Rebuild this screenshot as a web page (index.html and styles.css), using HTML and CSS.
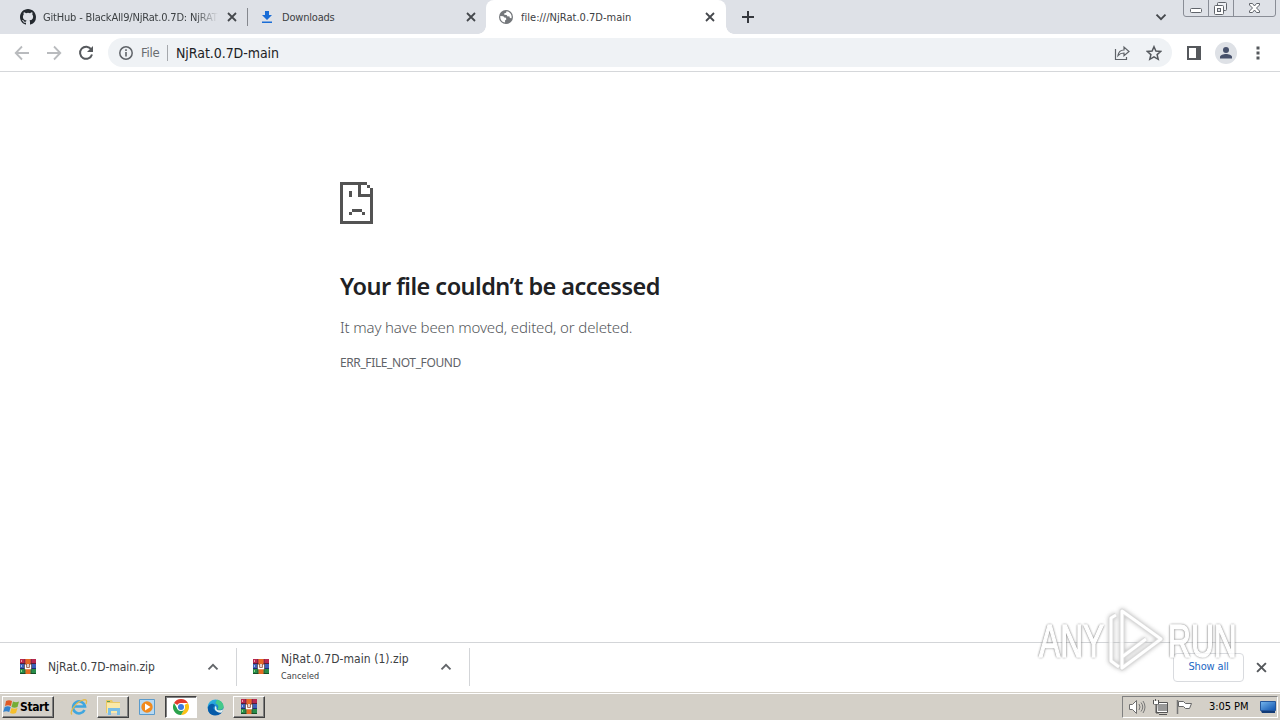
FILE: index.html
```html
<!DOCTYPE html>
<html lang="en">
<head>
<meta charset="utf-8">
<title>file:///NjRat.0.7D-main</title>
<link rel="stylesheet" href="styles.css">
</head>
<body>
<svg class="defs" width="0" height="0">
  <defs>
    <linearGradient id="blue" x1="0" y1="0" x2="1" y2="1"><stop offset="0" stop-color="#78b8ee"/><stop offset="1" stop-color="#0b50ad"/></linearGradient>
    <linearGradient id="edge" x1="0" y1="0" x2="0.7" y2="1"><stop offset="0" stop-color="#35c1df"/><stop offset=".4" stop-color="#239dde"/><stop offset="1" stop-color="#0757a8"/></linearGradient>
    <symbol id="close" viewBox="0 0 10 10"><path d="M1 1l8 8M9 1l-8 8" fill="none" stroke="currentColor" stroke-width="1.8"/></symbol>
    <symbol id="chev" viewBox="0 0 12 8"><path d="M1.500 6.300L6 1.800l4.500 4.500" fill="none" stroke="currentColor" stroke-width="1.9"/></symbol>
    <symbol id="rar" viewBox="0 0 16 16">
      <path fill="#b82750" d="M0 0h16v5H0z"/><path fill="#3c60b8" d="M0 5h16v5H0z"/><path fill="#278c49" d="M0 10h16v5H0z"/>
      <path fill="#5c1c38" d="M0 4h16v1H0z"/><path fill="#202d70" d="M0 9h16v1H0z"/><path fill="#155126" d="M0 14h16v1H0z"/>
      <path fill="#efa0aa" d="M1 1h1v2H1z"/><path fill="#9dbcf0" d="M1 6h1v2H1z"/><path fill="#8edc88" d="M1 11h1v2H1z"/>
      <path fill="#e66a24" d="M5.500 0h5v15h-5z"/><path fill="#8c4630" d="M4.500 5h7v5h-7z"/><path fill="none" stroke="#fff" stroke-width="1.500" d="M5.500 5.500v4h5v-4M8 5v3"/>
      <path fill="#303030" d="M4 0h1v15H4zM11 0h1v15h-1z" opacity=".35"/>
    </symbol>
  </defs>
</svg>
<header class="tabstrip">
  <div class="tab tab-github">
    <svg class="fav" width="16" height="16" viewBox="0 0 16 16"><path fill="#24292f" d="M8 0C3.580 0 0 3.580 0 8c0 3.540 2.290 6.530 5.470 7.590.4.070.55-.17.55-.38 0-.19-.01-.82-.01-1.490-2.010.37-2.530-.49-2.690-.94-.09-.23-.48-.94-.82-1.130-.28-.15-.68-.52-.01-.53.63-.01 1.080.58 1.230.82.72 1.210 1.870.87 2.330.66.070-.52.28-.87.51-1.070-1.780-.2-3.640-.89-3.640-3.950 0-.87.31-1.590.82-2.150-.08-.2-.36-1.020.08-2.120 0 0 .67-.21 2.200.82a7.420 7.420 0 0 1 4 0c1.530-1.040 2.200-.82 2.200-.82.44 1.100.16 1.920.08 2.120.51.56.82 1.270.82 2.150 0 3.070-1.870 3.750-3.650 3.950.29.25.54.73.54 1.480 0 1.070-.01 1.930-.01 2.200 0 .21.15.46.55.38A8.010 8.010 0 0 0 16 8c0-4.420-3.580-8-8-8z"/></svg>
    <span class="tab-title fade t-github">GitHub - BlackAll9/NjRat.0.7D: NjRAT</span>
    <svg class="tab-close" width="10" height="10"><use href="#close"/></svg>
  </div>
  <div class="tab tab-downloads">
    <svg class="fav" width="16" height="16" viewBox="0 0 16 16"><path fill="#1a6dd6" d="M6 2h4v4h3l-5 5-5-5h3zM3 12.500h10V14H3z"/></svg>
    <span class="tab-title t-downloads">Downloads</span>
    <svg class="tab-close" width="10" height="10"><use href="#close"/></svg>
  </div>
  <div class="tab tab-active">
    <svg class="fav" width="16" height="16" viewBox="0 0 16 16"><circle cx="8" cy="8" r="7" fill="#74777b"/><path fill="#fff" d="M2.300 7l3 .2 1 1.300 1.700.3.300 1.600-1.300 1 .1 2.100C4 13.200 2 10.500 2.300 7zM8.500 2.300l-.4 1.500-2 .7.2 1.300 2.300.1 1 1.600 1.700-.2.600 1.700 1.500.2c1-3-1-6.500-4.900-6.900z"/></svg>
    <span class="tab-title t-active">file:///NjRat.0.7D-main</span>
    <svg class="tab-close" width="10" height="10"><use href="#close"/></svg>
  </div>
  <svg class="newtab" width="12" height="12" viewBox="0 0 12 12"><path d="M6 0v12M0 6h12" stroke="#35383e" stroke-width="2"/></svg>
  <svg class="tabsearch" width="12" height="8"><use href="#chev"/></svg>
  <div class="winctl">
    <svg width="93" height="17" viewBox="0 0 93 17"><path d="M.5 0v14q0 2.500 2.500 2.500h87q2.500 0 2.500-2.500V0M25.500 0v16M50.500 0v16" fill="none" stroke="#898d96"/><rect x="7.500" y="8.500" width="11" height="4" rx="1" fill="#fff" stroke="#60646b"/><rect x="34.500" y="2.500" width="9" height="8" rx="1" fill="#eef0f4" stroke="#60646b"/><rect x="31.500" y="5.500" width="9" height="9" rx="1" fill="#fff" stroke="#60646b"/><rect x="34.500" y="8.500" width="3" height="3" fill="#dee1e7" stroke="#60646b"/><path d="M66.500 3.500h3l2 2.500 2-2.500h3v1.500l-3 3 3 3v1.500h-3l-2-2.500-2 2.500h-3V11l3-3-3-3z" fill="#fff" stroke="#60646b"/></svg>
  </div>
</header>
<div class="toolbar">
  <svg class="nav" width="16" height="16" viewBox="0 0 16 16"><path d="M15 8H2M8 1.500L1.700 8 8 14.500" fill="none" stroke="#b9bbbe" stroke-width="1.800"/></svg>
  <svg class="nav" width="16" height="16" viewBox="0 0 16 16"><path d="M1 8h13M8 1.500L14.300 8 8 14.500" fill="none" stroke="#b9bbbe" stroke-width="1.800"/></svg>
  <svg class="nav" width="16" height="16" viewBox="0 0 16 16"><path d="M13.200 4.300A6.100 6.100 0 1 0 14 9.500" fill="none" stroke="#56595d" stroke-width="2"/><path d="M15 1v6H9z" fill="#56595d"/></svg>
  <div class="omnibox">
    <svg class="info" width="14" height="14" viewBox="0 0 14 14"><circle cx="7" cy="7" r="6.200" fill="none" stroke="#5f6368" stroke-width="1.500"/><path d="M7 6v4.500M7 3.300v1.600" stroke="#5f6368" stroke-width="1.600"/></svg>
    <span class="scheme">File</span><i class="sep"></i><span class="url">NjRat.0.7D-main</span>
    <svg class="share" width="16" height="16" viewBox="0 0 16 16"><path d="M1.500 4v10.500h11V12M4 10.500C4.500 7 6.500 5 10 5V2l5 4.500-5 4.300V8C7.500 8 5.500 8.800 4 10.500z" fill="none" stroke="#5f6368" stroke-width="1.200"/></svg>
    <svg class="star" width="16" height="16" viewBox="0 0 16 16"><path d="M8 1.700l1.900 4.400 4.800.4-3.600 3.100 1.100 4.700L8 11.800l-4.200 2.500 1.100-4.700-3.600-3.100 4.800-.4z" fill="none" stroke="#55595e" stroke-width="1.500"/></svg>
  </div>
  <svg class="panel" width="14" height="14" viewBox="0 0 14 14"><path fill="#55585c" fill-rule="evenodd" d="M0 0h14v14H0zM2 2v10h7V2z"/></svg>
  <svg class="avatar" width="22" height="22" viewBox="0 0 22 22"><circle cx="11" cy="11" r="11" fill="#dee1e6"/><circle cx="11" cy="8" r="3" fill="#47516b"/><path d="M5 16.500V15c0-2 3.500-3 6-3s6 1 6 3v1.500z" fill="#47516b"/></svg>
  <svg class="more" width="4" height="14" viewBox="0 0 4 14"><path d="M.5.500h3v3h-3zM.5 5.500h3v3h-3zM.5 10.500h3v3h-3z" fill="#55585c"/></svg>
</div>
<main class="page">
  <svg class="sad" width="33" height="42" viewBox="0 0 33 42" shape-rendering="crispEdges"><path fill="#535353" d="M0 0h27v3H3v36h27V15H18V3h3v9h9V6h3v36H0zM27 3h3v3h-3zM9 9h3v6H9zM12 27h10v3H12zM9 30h3v3H9zM22 30h3v3h-3z"/></svg>
  <h1>Your file couldn’t be accessed</h1>
  <p class="summary">It may have been moved, edited, or deleted.</p>
  <p class="code">ERR_FILE_NOT_FOUND</p>
</main>
<footer class="shelf">
  <div class="dl">
    <svg width="16" height="16"><use href="#rar"/></svg>
    <div class="dl-text"><span class="dl-name n1">NjRat.0.7D-main.zip</span></div>
    <svg class="dl-chev" width="12" height="8"><use href="#chev"/></svg>
  </div>
  <div class="dl dl-second">
    <svg width="16" height="16"><use href="#rar"/></svg>
    <div class="dl-text"><span class="dl-name n2">NjRat.0.7D-main (1).zip</span><span class="dl-status">Canceled</span></div>
    <svg class="dl-chev" width="12" height="8"><use href="#chev"/></svg>
  </div>
  <button class="showall"><span>Show all</span></button>
  <svg class="shelf-close" width="11" height="11"><use href="#close"/></svg>
</footer>
<div class="taskbar">
  <div class="start">
    <svg width="17" height="16" viewBox="0 0 17 16"><path fill="#e05a25" d="M3 2c2-1 4-1 6 0L8 7C6 6 4 6 2 7z"/><path fill="#75ad37" d="M10 2.500c2 1 4 1 6 0L14.500 8c-2 1-4 1-6 0z"/><path fill="#3483cd" d="M1.700 8c2-1 4-1 6 0l-1.500 5c-2-1-4-1-6 0z"/><path fill="#f5bf2c" d="M8.500 9c2 1 4 1 6 0L13 14c-2 1-4 1-6 0z"/></svg>
    <b>Start</b>
  </div>
  <div class="task"><svg width="18" height="18" viewBox="0 0 18 18"><path d="M14.500 12A6 6 0 1 1 15 8.500H4" fill="none" stroke="#3fa6df" stroke-width="2.600"/><path d="M2 16.500C-1 14 6 4 13 2c4-1 4 1 3 4" fill="none" stroke="#e3ba4b" stroke-width="1.300"/></svg></div>
  <div class="task raised"><svg width="18" height="18" viewBox="0 0 18 18"><path fill="#e8c866" d="M2 2h6l1 2h7v11H2z"/><path fill="#fae9a8" d="M3 5h13v10H3z"/><path fill="#79bde6" d="M4 10h12v7h-3v-4H7v4H4z"/><path fill="#5c9d59" d="M3 3h3v1H3z"/></svg></div>
  <div class="task"><svg width="16" height="16" viewBox="0 0 16 16"><path fill="#b7d9f2" stroke="#5a9bcc" d="M.5.500h15v15H.5z"/><circle cx="8" cy="8" r="5.700" fill="#f18a1d"/><path fill="#fff" d="M6 4.500v7L11.500 8z"/></svg></div>
  <div class="task pressed"><svg width="16" height="16" viewBox="0 0 16 16"><path fill="#e33b2e" d="M8 8L1.070 4A8 8 0 0 1 14.930 4H8z"/><path fill="#fbc116" d="M8 8l6.930-4A8 8 0 0 1 8 16l3.500-6z"/><path fill="#2ba24c" d="M8 8l3.500 2L8 16A8 8 0 0 1 1.070 4L4.500 10z"/><circle cx="8" cy="8" r="4" fill="#fff"/><circle cx="8" cy="8" r="3" fill="#3b79e1"/></svg></div>
  <div class="task"><svg width="17" height="17" viewBox="0 0 17 17"><circle cx="8.500" cy="8.500" r="8" fill="url(#edge)"/><path fill="#43c98a" d="M10 .7c5 .8 7.500 5 6.300 8.300-1 2-4 2.300-6 1.200 2-2 1-5-2-6z"/><path fill="#075ba8" d="M1 8c2-4 6-4 7-1-3 1-2 6 5 6-5 6-13 3-12-5z"/><path fill="#e3f0ed" d="M8.500 7c2 1.500 0 3 2 4 2 .7 4.500.3 6-1l-1.500 3.500c-5 1-9-3-6.500-6.500z"/></svg></div>
  <div class="task raised"><svg width="16" height="16"><use href="#rar"/></svg></div>
  <div class="tray">
    <svg width="18" height="16" viewBox="0 0 18 16"><path d="M1.500 5.500h3l4-4v13l-4-4h-3z" fill="#fff" stroke="#6e6e6e"/><path d="M11 5q2 3 0 6M13 3.500q3.500 4.500 0 9M15 2q4 6 0 12" fill="none" stroke="#777"/></svg>
    <svg width="17" height="16" viewBox="0 0 17 16"><path d="M5.500 4.500h10v8h-10z" fill="#999" stroke="#fff"/><path d="M5 3.500h10.500v10H4.500zM7 15.500h8" fill="none" stroke="#555"/><path d="M1.500 1v4h5V1M3.500 0v4M4 5v9h3" fill="none" stroke="#555"/><path d="M2 2h4v3H2z" fill="#fff"/></svg>
    <svg width="17" height="16" viewBox="0 0 17 16"><path d="M2.500 1v14" stroke="#777" stroke-width="1.500"/><path d="M3.500 2.500h5l2 2h6l-2 5h-4l-2-2h-5z" fill="#fff" stroke="#666"/></svg>
    <span class="clock">3:05 PM</span>
    <svg class="desk" width="16" height="14" viewBox="0 0 16 14"><path fill="url(#blue)" stroke="#24569b" d="M.5 1.500h15v9H.5z"/><path fill="#123b76" d="M1 11h14v2H2z"/></svg>
  </div>
</div>
<div class="watermark">
  <span class="wm-any">ANY</span>
  <svg width="60" height="68" viewBox="0 0 60 68"><g fill="none" stroke-linejoin="round"><path d="M16 4l39 28-39 29zM16 15v35l24-18M10 8L5 11v43l8 6" stroke="#d2d2d2" stroke-width="5"/><path d="M16 4l39 28-39 29zM16 15v35l24-18M10 8L5 11v43l8 6" stroke="#fff" stroke-width="3"/></g></svg>
  <span class="wm-run">RUN</span>
</div>
</body>
</html>
```
FILE: styles.css
```css
* { box-sizing: border-box; }
html, body { height: 100%; }
body { margin: 0; display: flex; flex-direction: column; overflow: hidden; background: #fff; color: #3c4043; font: 11px/14px "DejaVu Sans Condensed", "DejaVu Sans", sans-serif; white-space: nowrap; }
svg { flex: none; display: block; }
.defs { position: absolute; }
.tabstrip { display: flex; height: 34px; flex: none; background: #dee1e7; align-items: center; }
.tab { display: flex; height: 34px; align-items: center; flex: none; }
.tab-github { width: 248px; padding: 0 10px 0 20px; border-right: 1px solid transparent; background: linear-gradient(#85888e, #85888e) 100% 8px / 1px 18px no-repeat border-box; }
.tab-downloads { width: 238px; padding: 0 10px 0 11px; }
.tab-active { width: 240px; padding: 0 11px 0 12px; background: #fff; border-radius: 8px 8px 0 0; position: relative; }
.tab-active::before, .tab-active::after { content: ""; position: absolute; bottom: 0; width: 8px; height: 8px; }
.tab-active::before { left: -8px; background: radial-gradient(circle at 0 0, transparent 7.500px, #fff 8px); }
.tab-active::after { right: -8px; background: radial-gradient(circle at 100% 0, transparent 7.500px, #fff 8px); }
.tab-title { margin-left: 7px; padding-top: 1px; overflow: hidden; }
.fade { width: 176px; -webkit-mask-image: linear-gradient(90deg, #000 152px, transparent 175px); mask-image: linear-gradient(90deg, #000 152px, transparent 175px); }
.tab-close { margin-left: auto; color: #45484d; }
.t-github { letter-spacing: -0.18px; }
.t-downloads { letter-spacing: -0.2px; }
.t-active { letter-spacing: 0.02px; }
.newtab { margin-left: 16px; }
.tabsearch { margin-left: auto; transform: rotate(180deg); color: #45484d; }
.winctl { margin: 0 4px 0 16px; align-self: flex-start; }
.toolbar { display: flex; align-items: center; height: 38px; flex: none; padding: 0 20px 0 14px; border-bottom: 1px solid #d5d7da; }
.nav { margin-right: 16px; }
.omnibox { display: flex; align-items: center; width: 1064px; height: 29px; margin-left: -2px; border-radius: 15px; background: #eff2f5; padding: 0 10px 0 11px; font-size: 13px; }
.scheme { margin-left: 8px; width: 19px; color: #686c70; letter-spacing: -0.3px; font-size: 13px; }
.sep { width: 1px; height: 16px; background: #a5a8ac; margin: 0 8px 0 7px; }
.url { color: #202124; font-size: 14px; letter-spacing: -0.05px; }
.share { margin-left: auto; margin-right: 16px; }
.panel { margin-left: 15px; }
.avatar { margin-left: 14px; }
.more { margin-left: auto; }
.page { flex: 1; padding: 110px 0 0 340px; font-family: "Noto Sans", sans-serif; }
h1 { margin: 47px 0 0; font: 600 23.500px/31px "Noto Sans", sans-serif; color: #202124; letter-spacing: -0.53px; }
.summary { margin: 14px 0 0; font-size: 15px; line-height: 22px; color: #55585c; font-weight: 300; letter-spacing: -0.14px; }
.code { margin: 18px 0 0; font-size: 12px; line-height: 14px; color: #5f6368; letter-spacing: -0.39px; }
.shelf { display: flex; align-items: center; flex: none; height: 50px; border-top: 1px solid #d3d5d8; background: #fff; padding: 0 13px 1px 0; }
.dl { display: flex; align-items: center; width: 237px; height: 38px; padding: 0 17px 0 20px; border-right: 1px solid #d3d5d8; }
.dl-second { width: 233px; padding: 0 17px 0 16px; }
.dl-text { display: flex; flex-direction: column; margin-left: 12px; }
.dl-name { font-size: 12px; line-height: 17px; }
.n1 { letter-spacing: -0.06px; }
.n2 { letter-spacing: 0.05px; }
.dl-status { font-size: 9px; line-height: 16px; letter-spacing: 0.1px; }
.dl-chev { margin-left: auto; color: #626569; }
.showall { margin: 0 12px 0 auto; width: 71px; height: 29px; border: 1px solid #d9dbdf; border-radius: 4px; background: #fff; padding: 0; color: #2368c4; font: 11px/14px "DejaVu Sans Condensed", sans-serif; letter-spacing: -0.15px; }
.shelf-close { color: #55585c; }
.taskbar { display: flex; align-items: center; flex: none; height: 28px; background: #d4d0c8; border-top: 1px solid #d4d0c8; box-shadow: inset 0 1px #fff; padding: 1px 0 0 2px; color: #000; }
.start, .raised { border: 1px solid; border-color: #fff #404040 #404040 #fff; box-shadow: inset -1px -1px #808080; }
.start { display: flex; align-items: center; width: 52px; height: 22px; margin-right: 9px; }
.start b { font: bold 12px/14px "DejaVu Sans Condensed", sans-serif; letter-spacing: -0.4px; }
.task { display: flex; align-items: center; justify-content: center; width: 32px; height: 22px; margin-right: 2px; }
.pressed { background: #fff; border: 1px solid; border-color: #404040 #fff #fff #404040; box-shadow: inset 1px 1px #808080; }
.tray { display: flex; align-items: center; margin-left: auto; margin-right: 2px; height: 22px; width: 156px; padding: 0 1px 0 5px; border: 1px solid; border-color: #808080 #fff #fff #808080; gap: 6px; }
.clock { margin-left: 11px; letter-spacing: -0.05px; }
.desk { margin-left: auto; }
.watermark { position: absolute; left: 1039px; top: 607px; display: flex; align-items: center; height: 68px; opacity: .8; pointer-events: none; font: 46px/46px "Liberation Sans", sans-serif; color: #fff; -webkit-text-stroke: 1.500px #fff; text-shadow: 0 0 3px #444, 0 0 3px #777, 0 0 2px #888; }
.watermark svg { filter: drop-shadow(0 0 2px #aaa); }
.wm-any, .wm-run { display: block; width: 67px; transform: scaleX(.69); transform-origin: 0 50%; }
.wm-run { margin-left: 2px; }
```
